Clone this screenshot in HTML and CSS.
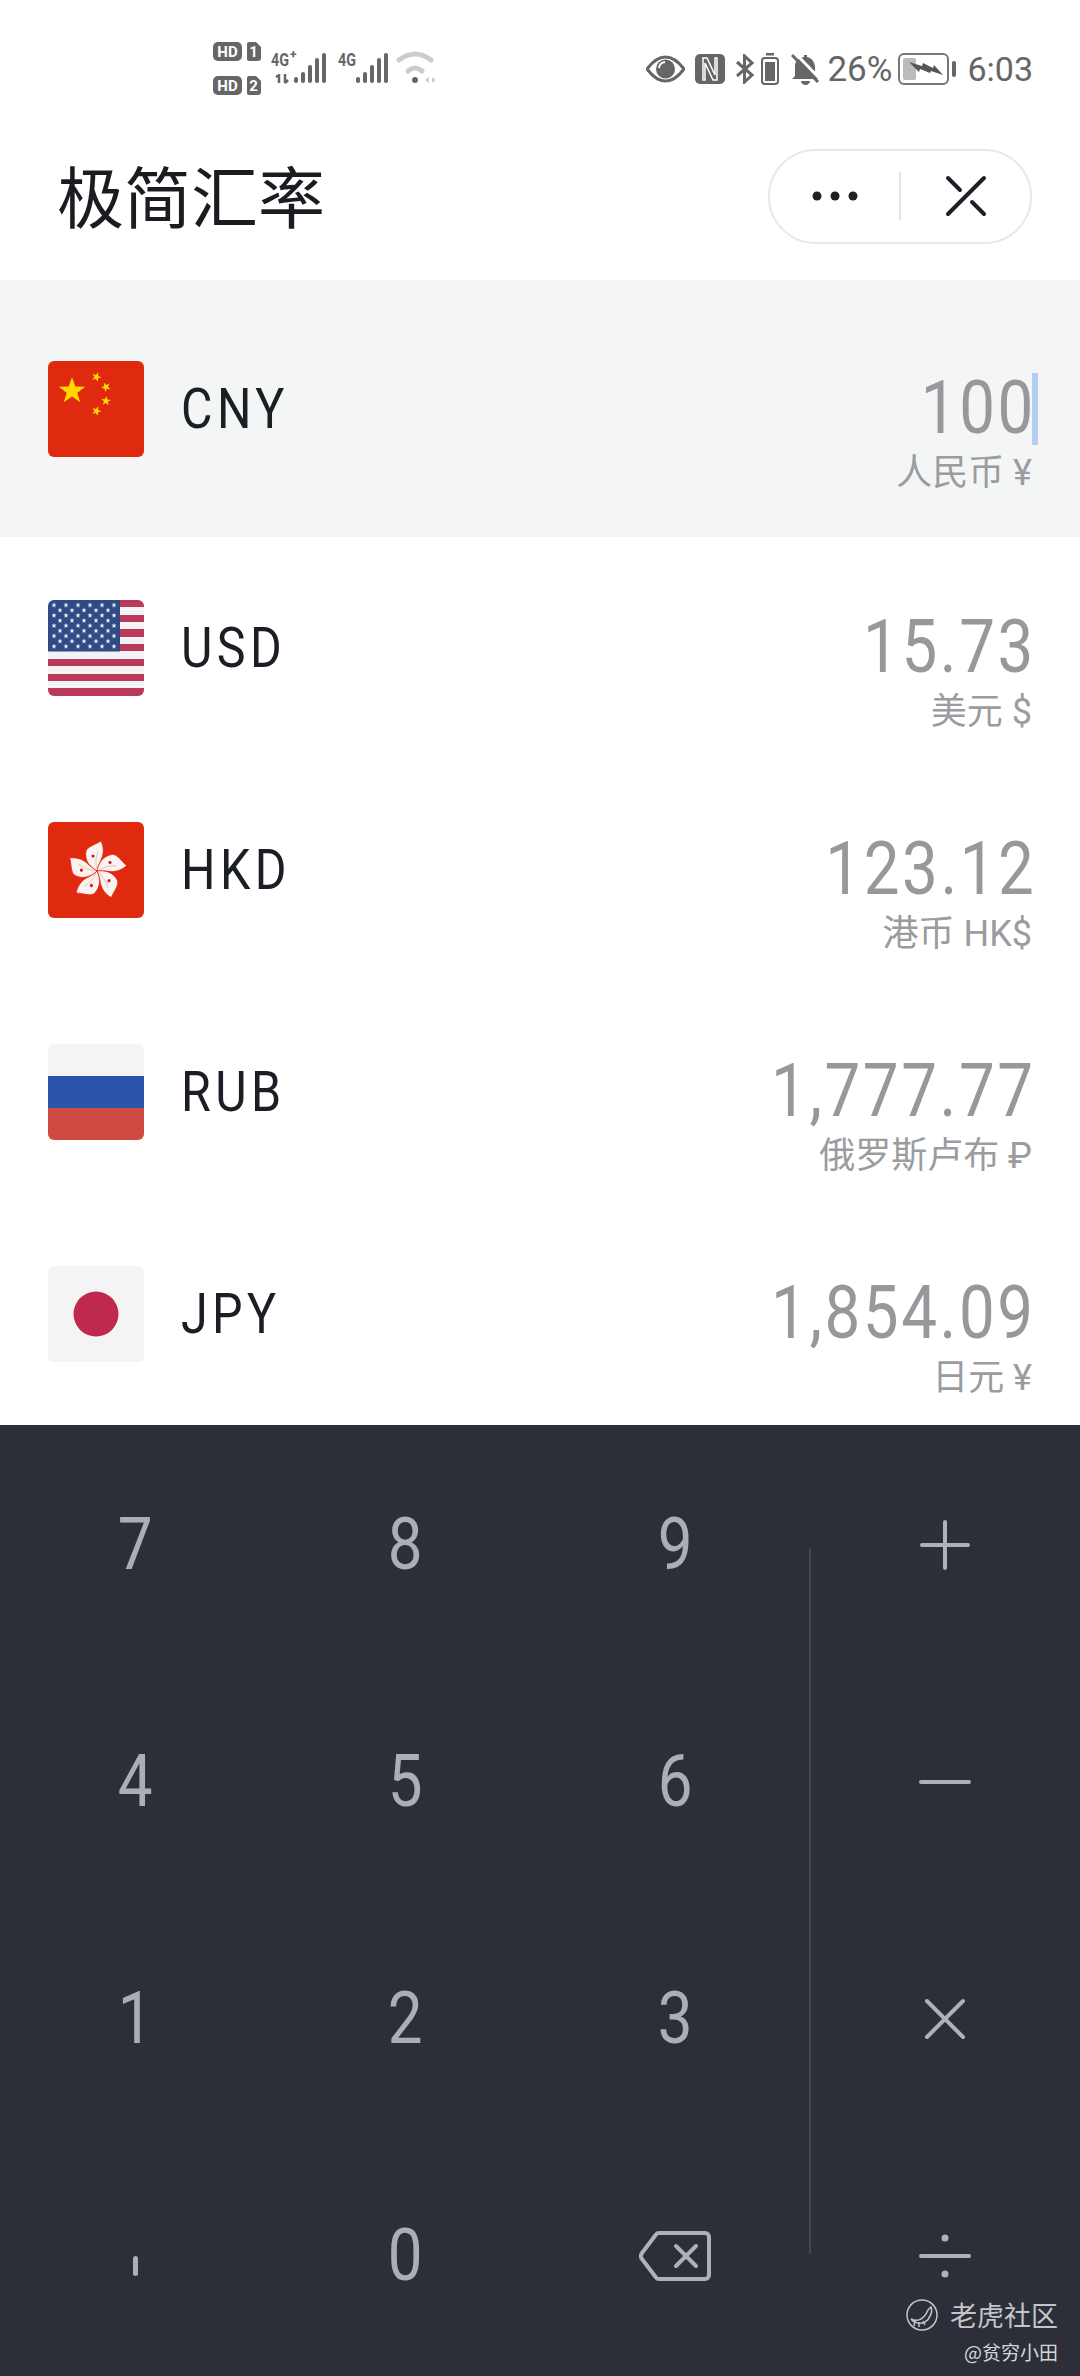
FILE: index.html
```html
<!DOCTYPE html>
<html lang="zh-CN">
<head>
<meta charset="UTF-8">
<meta name="viewport" content="width=device-width, initial-scale=1.0">
<title>极简汇率</title>
<link rel="stylesheet" href="styles.css">
</head>
<body>
    <div class="status-bar">
        <svg class="status-left" width="230" height="60" viewBox="0 0 230 60">
            <rect x="0" y="3" width="29" height="19" rx="5" fill="#666"/>
            <text x="14.5" y="18" class="sb-badge">HD</text>
            <path d="M36 3h7l5 5v11a3 3 0 0 1-3 3h-9a2 2 0 0 1-2-2v-15a2 2 0 0 1 2-2z" fill="#666"/>
            <text x="40.5" y="18" class="sb-badge">1</text>
            <rect x="0" y="37" width="29" height="19" rx="5" fill="#666"/>
            <text x="14.5" y="52" class="sb-badge">HD</text>
            <path d="M36 37h7l5 5v11a3 3 0 0 1-3 3h-9a2 2 0 0 1-2-2v-15a2 2 0 0 1 2-2z" fill="#666"/>
            <text x="40.5" y="52" class="sb-badge">2</text>

            <text x="58" y="27" class="sb-net" textLength="18" lengthAdjust="spacingAndGlyphs">4G</text>
            <text x="77" y="20" class="sb-net-plus">+</text>
            <path d="M66 36l-3 2M66 35v9M72 35v9M72 44l3-3" stroke="#666" stroke-width="2.5" fill="none"/>
            <g fill="#666">
                <rect x="81" y="38" width="4" height="6" rx="2"/>
                <rect x="88" y="33" width="4" height="11" rx="2"/>
                <rect x="95" y="26" width="4" height="18" rx="2"/>
                <rect x="102" y="19" width="4" height="25" rx="2"/>
                <rect x="109" y="14" width="4" height="30" rx="2"/>
            </g>

            <text x="125" y="27" class="sb-net" textLength="18" lengthAdjust="spacingAndGlyphs">4G</text>
            <g fill="#666">
                <rect x="143" y="38" width="4" height="6" rx="2"/>
                <rect x="150" y="33" width="4" height="11" rx="2"/>
                <rect x="157" y="26" width="4" height="18" rx="2"/>
                <rect x="164" y="19" width="4" height="25" rx="2"/>
                <rect x="171" y="14" width="4" height="30" rx="2"/>
            </g>

            <path d="M186 21Q202 9 218 21" stroke="#ccc" stroke-width="5" fill="none" stroke-linecap="round"/>
            <path d="M195 32Q202 26 209 32" stroke="#ccc" stroke-width="5" fill="none" stroke-linecap="round"/>
            <circle cx="202" cy="41" r="3" fill="#666"/>
            <path d="M216 38v6l-4-3zM219 38v6l4-3z" fill="#ccc"/>
        </svg>
        <div class="status-right">
            <svg width="39" height="28" viewBox="0 0 39 28">
                <path d="M1 14Q10 2 19.500 2T38 14Q29 26 19.500 26T1 14Z" fill="none" stroke="#666" stroke-width="3"/>
                <circle cx="19.500" cy="14" r="9.500" fill="#666"/>
                <path d="M13 13a7 7 0 0 1 6-6" stroke="#fff" stroke-width="2" fill="none"/>
            </svg>
            <svg width="30" height="30" viewBox="0 0 30 30">
                <rect width="30" height="30" rx="5" fill="#666"/>
                <path d="M8 4h4l8 17V4h2v22h-4L10 9v17H8z" fill="none" stroke="#fff" stroke-width="1.500"/>
            </svg>
            <svg width="19" height="30" viewBox="0 0 19 30">
                <path d="M2 8l15 13-7.500 7V2L17 9 2 22" fill="none" stroke="#666" stroke-width="3"/>
            </svg>
            <svg class="sb-small-battery" width="18" height="32" viewBox="0 0 18 32">
                <rect x="5" y="0" width="8" height="2.500" fill="#666"/>
                <rect x="1" y="5" width="16" height="26" rx="3" fill="none" stroke="#666" stroke-width="2"/>
                <rect x="4" y="9" width="10" height="19" fill="#666"/>
            </svg>
            <svg class="sb-bell" width="29" height="32" viewBox="0 0 29 32">
                <path d="M13 2h3v2c5 1 8 5 8 11v6l4 5H1l3-3V13c0-5 3-8 9-9z" fill="#666"/>
                <path d="M10 28a4.500 4 0 0 0 9 0z" fill="#666"/>
                <path d="M5 1l25 26" stroke="#fff" stroke-width="3"/>
                <path d="M1 2l26 27" stroke="#666" stroke-width="3"/>
            </svg>
            <span class="sb-text sb-percent">26%</span>
            <svg class="sb-battery" width="59" height="32" viewBox="0 0 59 32">
                <rect x="1" y="1" width="49" height="30" rx="5" fill="none" stroke="#777" stroke-width="2"/>
                <rect x="5" y="5" width="13" height="22" rx="2" fill="#bbb"/>
                <path d="M11 9l13 4 1-3 10 5 1-3 9 10-12-4-1 2-10-4-1 3z" fill="#555"/>
                <rect x="54" y="8" width="4" height="16" rx="2" fill="#666"/>
            </svg>
            <span class="sb-text sb-time">6:03</span>
        </div>
    </div>

    <div class="header">
        <h1 class="title">极简汇率</h1>
        <div class="capsule">
            <div class="capsule-btn">
                <svg width="46" height="10" viewBox="0 0 46 10">
                    <circle cx="5" cy="5" r="4.500"/><circle cx="23" cy="5" r="4.500"/><circle cx="41" cy="5" r="4.500"/>
                </svg>
            </div>
            <div class="capsule-line"></div>
            <div class="capsule-btn">
                <svg width="40" height="40" viewBox="0 0 40 40" fill="none" stroke="#1d1f26" stroke-width="4" stroke-linecap="round">
                    <path d="M2 38L38 2M2 2l12 12M26 26l12 12"/>
                </svg>
            </div>
        </div>
    </div>

    <div class="rate-list">
        <div class="rate-row active">
            <svg class="flag" viewBox="0 0 96 96">
                <rect width="96" height="96" rx="6" fill="#e02a10"/>
                <polygon class="star-cn" points="0,-14 3.300,-4.500 13.300,-4.300 5.300,1.700 8.200,11.300 0,5.600 -8.200,11.300 -5.300,1.700 -13.300,-4.300 -3.300,-4.500" transform="translate(24 30)"/>
                <polygon class="star-cn" points="0,-14 3.300,-4.500 13.300,-4.300 5.300,1.700 8.200,11.300 0,5.600 -8.200,11.300 -5.300,1.700 -13.300,-4.300 -3.300,-4.500" transform="translate(48.500 16) rotate(20) scale(.36)"/>
                <polygon class="star-cn" points="0,-14 3.300,-4.500 13.300,-4.300 5.300,1.700 8.200,11.300 0,5.600 -8.200,11.300 -5.300,1.700 -13.300,-4.300 -3.300,-4.500" transform="translate(58 26) rotate(45) scale(.36)"/>
                <polygon class="star-cn" points="0,-14 3.300,-4.500 13.300,-4.300 5.300,1.700 8.200,11.300 0,5.600 -8.200,11.300 -5.300,1.700 -13.300,-4.300 -3.300,-4.500" transform="translate(58 40) rotate(5) scale(.36)"/>
                <polygon class="star-cn" points="0,-14 3.300,-4.500 13.300,-4.300 5.300,1.700 8.200,11.300 0,5.600 -8.200,11.300 -5.300,1.700 -13.300,-4.300 -3.300,-4.500" transform="translate(48.500 50) rotate(20) scale(.36)"/>
            </svg>
            <span class="code">CNY</span>
            <div class="value">
                <div class="amount">100</div>
                <div class="unit">人民币 ¥</div>
                <span class="caret"></span>
            </div>
        </div>

        <div class="rate-row">
            <svg class="flag" viewBox="0 0 96 96">
                <defs>
                    <clipPath id="flag-clip"><rect width="96" height="96" rx="6"/></clipPath>
                    <pattern id="stars-a" width="12" height="10.300" patternUnits="userSpaceOnUse">
                        <polygon points="6,2.500 6.700,4.300 8.500,4.300 7.100,5.500 7.600,7.300 6,6.300 4.400,7.300 4.900,5.500 3.500,4.300 5.300,4.300" fill="#f4f2f5"/>
                    </pattern>
                    <pattern id="stars-b" x="6" y="5.150" width="12" height="10.300" patternUnits="userSpaceOnUse">
                        <polygon points="6,2.500 6.700,4.300 8.500,4.300 7.100,5.500 7.600,7.300 6,6.300 4.400,7.300 4.900,5.500 3.500,4.300 5.300,4.300" fill="#f4f2f5"/>
                    </pattern>
                </defs>
                <g clip-path="url(#flag-clip)">
                    <rect width="96" height="96" fill="#f4f2f5"/>
                    <path d="M72 0h24v7H72zM72 15h24v7H72zM72 29h24v8H72zM72 44h24v7H72zM0 59h96v7H0zM0 74h96v7H0zM0 88h96v8H0z" fill="#b93a5b"/>
                    <rect width="72" height="51.500" fill="#2f4b85"/>
                    <rect width="72" height="51.500" fill="url(#stars-a)"/>
                    <rect x="6" y="5.150" width="60" height="41.200" fill="url(#stars-b)"/>
                </g>
            </svg>
            <span class="code">USD</span>
            <div class="value">
                <div class="amount">15.73</div>
                <div class="unit">美元 $</div>
            </div>
        </div>

        <div class="rate-row">
            <svg class="flag" viewBox="0 0 96 96">
                <rect width="96" height="96" rx="6" fill="#e02a10"/>
                <defs>
                    <g id="petal">
                        <path d="M0 0C-6-3-13-10-11-20C-9-25-2-26 4-30C7-24 7-17 4-11C2-7 1-3 0 0Z" fill="#fbf3f0" stroke="#e02a10" stroke-width=".8"/>
                        <path d="M0-2C-2-8-1-14 1-20" stroke="#e9b5ad" stroke-width=".8" fill="none"/>
                        <circle cx="-4" cy="-15" r="1.600" fill="#c8202a"/>
                    </g>
                </defs>
                <use href="#petal" transform="translate(49 49)"/>
                <use href="#petal" transform="translate(49 49) rotate(72)"/>
                <use href="#petal" transform="translate(49 49) rotate(144)"/>
                <use href="#petal" transform="translate(49 49) rotate(216)"/>
                <use href="#petal" transform="translate(49 49) rotate(288)"/>
            </svg>
            <span class="code">HKD</span>
            <div class="value">
                <div class="amount">123.12</div>
                <div class="unit">港币 HK$</div>
            </div>
        </div>

        <div class="rate-row">
            <svg class="flag" viewBox="0 0 96 96">
                <g clip-path="url(#flag-clip)">
                    <rect width="96" height="32" fill="#f4f4f5"/>
                    <rect y="32" width="96" height="32" fill="#2a55ab"/>
                    <rect y="64" width="96" height="32" fill="#cf4a42"/>
                </g>
            </svg>
            <span class="code">RUB</span>
            <div class="value">
                <div class="amount">1,777.77</div>
                <div class="unit">俄罗斯卢布 ₽</div>
            </div>
        </div>

        <div class="rate-row">
            <svg class="flag" viewBox="0 0 96 96">
                <rect width="96" height="96" rx="6" fill="#f4f4f5"/>
                <circle cx="48" cy="48" r="22.500" fill="#c0294f"/>
            </svg>
            <span class="code">JPY</span>
            <div class="value">
                <div class="amount">1,854.09</div>
                <div class="unit">日元 ¥</div>
            </div>
        </div>
    </div>

    <div class="keypad">
        <div class="key"><span class="digit">7</span></div>
        <div class="key"><span class="digit">8</span></div>
        <div class="key"><span class="digit">9</span></div>
        <div class="key">
            <svg class="op" width="60" height="60" viewBox="0 0 60 60"><path d="M7 30h46M30 7v46"/></svg>
        </div>
        <div class="key"><span class="digit">4</span></div>
        <div class="key"><span class="digit">5</span></div>
        <div class="key"><span class="digit">6</span></div>
        <div class="key">
            <svg class="op" width="60" height="60" viewBox="0 0 60 60"><path d="M6 30h48"/></svg>
        </div>
        <div class="key"><span class="digit">1</span></div>
        <div class="key"><span class="digit">2</span></div>
        <div class="key"><span class="digit">3</span></div>
        <div class="key">
            <svg class="op" width="60" height="60" viewBox="0 0 60 60"><path d="M12 12l36 36M48 12L12 48"/></svg>
        </div>
        <div class="key"><span class="dot-key"></span></div>
        <div class="key"><span class="digit">0</span></div>
        <div class="key">
            <svg class="op" width="72" height="50" viewBox="0 0 72 50">
                <path d="M20 2H66a4 4 0 0 1 4 4V44a4 4 0 0 1-4 4H20a4 4 0 0 1-3-1.500L3 28a5 5 0 0 1 0-6L17 3.500A4 4 0 0 1 20 2Z"/>
                <path d="M37 15l20 20M57 15L37 35"/>
            </svg>
        </div>
        <div class="key">
            <svg class="op" width="60" height="60" viewBox="0 0 60 60">
                <path d="M6 30h48"/>
                <circle class="op-dot" cx="30" cy="12" r="3.500"/>
                <circle class="op-dot" cx="30" cy="48" r="3.500"/>
            </svg>
        </div>
        <div class="key-line"></div>
        <div class="watermark">
            <div class="wm-brand">
                <svg width="32" height="32" viewBox="0 0 32 32" fill="none" stroke="#c3c5c9" stroke-width="1.500">
                    <circle cx="16" cy="16" r="15"/>
                    <path d="M5 20c6 3 13 1 17-9l3-3c2 4-1 12-6 15-4 2-10 2-14-3z"/>
                    <path d="M9 22l-1 5M13 23l0 5M17 22l2 4"/>
                </svg>
                <span>老虎社区</span>
            </div>
            <div class="wm-user">@贫穷小田</div>
        </div>
    </div>
</body>
</html>
```

FILE: styles.css
```css
* {
    box-sizing: border-box;
}
body {
    margin: 0;
    width: 1080px;
    height: 2376px;
    overflow: hidden;
    background-color: #fff;
    font-family: Roboto, "Noto Sans CJK SC", sans-serif;
}

/* status bar */
.status-bar {
    height: 120px;
    padding: 18px 47px 0 213px;
    display: flex;
    align-items: center;
    justify-content: space-between;
}
.status-right {
    display: flex;
    align-items: center;
    gap: 10px;
}
.status-right svg {
    display: block;
}
.sb-badge {
    font: 700 15px Roboto, sans-serif;
    fill: #fff;
    text-anchor: middle;
}
.sb-net {
    font: 700 18px Roboto, sans-serif;
    fill: #666;
}
.sb-net-plus {
    font: 700 12px Roboto, sans-serif;
    fill: #666;
}
.sb-text {
    font-size: 34px;
    color: #666;
    white-space: nowrap;
}
.sb-small-battery {
    margin-left: -3px;
}
.sb-bell {
    margin-left: 2px;
}
.sb-percent {
    margin-left: -3px;
    font-size: 35px;
}
.sb-battery {
    margin-left: -4px;
}

/* title bar */
.header {
    height: 160px;
    padding: 0 48px 14px 57px;
    display: flex;
    align-items: center;
    justify-content: space-between;
}
.title {
    margin: 0;
    font-family: "Noto Sans CJK SC", sans-serif;
    font-size: 67px;
    font-weight: 400;
    color: #1a1c22;
}
.capsule {
    width: 264px;
    height: 95px;
    margin-top: 6px;
    border: 2px solid #e8e8e8;
    border-radius: 48px;
    display: flex;
    align-items: center;
}
.capsule-btn {
    flex: 1;
    display: flex;
    justify-content: center;
    align-items: center;
}
.capsule-btn svg {
    fill: #1d1f26;
    overflow: visible;
}
.capsule-line {
    width: 2px;
    height: 48px;
    background-color: #e4e4e4;
}

/* currency rows */
.rate-row {
    height: 222px;
    padding: 0 48px;
    display: flex;
    align-items: center;
}
.rate-row.active {
    height: 257px;
    background-color: #f4f6f6;
}
.flag {
    width: 96px;
    height: 96px;
    flex-shrink: 0;
}
.star-cn {
    fill: #ffd800;
}
.code {
    margin-left: 37px;
    font-size: 55px;
    color: #1c1e25;
    letter-spacing: 5px;
    transform: scaleX(.88);
    transform-origin: left center;
}
.value {
    position: relative;
    margin-left: auto;
    padding-top: 44px;
    text-align: right;
}
.amount {
    height: 84px;
    margin-right: -4px;
    font-size: 74px;
    line-height: 84px;
    color: #96989c;
    letter-spacing: 3px;
    white-space: nowrap;
    transform: scaleX(.86);
    transform-origin: right center;
}
.unit {
    height: 46px;
    font-size: 36px;
    line-height: 46px;
    color: #9a9c9f;
    white-space: nowrap;
}
.caret {
    position: absolute;
    top: 51px;
    right: -6px;
    width: 6px;
    height: 72px;
    background-color: #b3cdf3;
}

/* keypad */
.keypad {
    position: relative;
    height: 952px;
    padding-top: 1px;
    background-color: #2c2f38;
    display: grid;
    grid-template-columns: repeat(4, 270px);
    grid-auto-rows: 237px;
}
.key {
    display: flex;
    align-items: center;
    justify-content: center;
}
.digit {
    font-size: 72px;
    color: #abaeb5;
    transform: scaleX(.86);
}
.op {
    fill: none;
    stroke: #aeb1b8;
    stroke-width: 4;
    stroke-linecap: round;
}
.op-dot {
    fill: #aeb1b8;
    stroke: none;
}
.dot-key {
    width: 5px;
    height: 20px;
    margin-top: 20px;
    border-radius: 3px;
    background-color: #abaeb5;
}
.key-line {
    position: absolute;
    left: 809px;
    top: 123px;
    width: 2px;
    height: 706px;
    background-color: #43464e;
}
.watermark {
    position: absolute;
    right: 22px;
    bottom: 12px;
    text-align: right;
    font-family: "Noto Sans CJK SC", sans-serif;
}
.wm-brand {
    display: flex;
    align-items: center;
    gap: 12px;
    font-size: 27px;
    color: #c3c5c9;
}
.wm-user {
    margin-top: 4px;
    font-size: 19px;
    color: #d5d6d8;
}
```
